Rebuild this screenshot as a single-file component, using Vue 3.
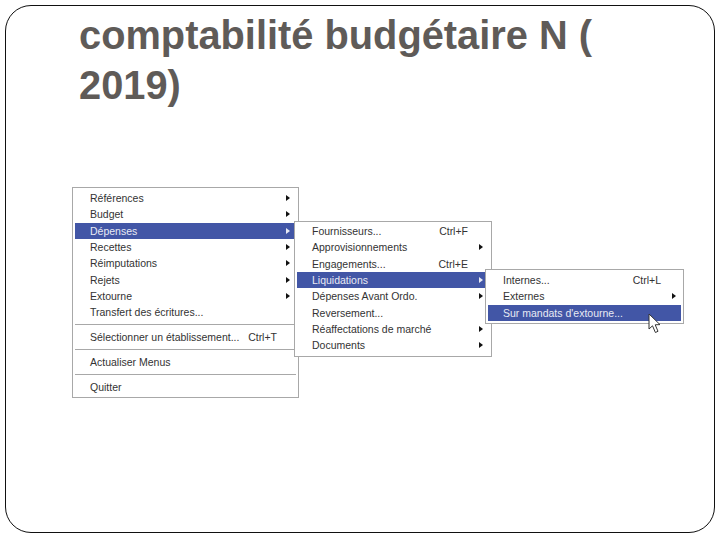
<template>
  <div class="slide">
    <h1 class="title">comptabilité budgétaire N ( 2019)</h1>
    <div class="shot">
      <ul class="menu main">
        <template v-for="(item, index) in mainMenu" :key="index">
          <li v-if="item.sep" class="sep"></li>
          <li v-else class="row" :class="{ active: item.active }">
            <span class="label">{{ item.label }}</span>
            <span v-if="item.key" class="key">{{ item.key }}</span>
            <span v-if="item.sub" class="arrow"></span>
          </li>
        </template>
      </ul>
      <ul class="menu depenses">
        <li v-for="item in depensesMenu" :key="item.label" class="row" :class="{ active: item.active }">
          <span class="label">{{ item.label }}</span>
          <span v-if="item.key" class="key">{{ item.key }}</span>
          <span v-if="item.sub" class="arrow"></span>
        </li>
      </ul>
      <ul class="menu liquidations">
        <li v-for="item in liquidationsMenu" :key="item.label" class="row" :class="{ active: item.active }">
          <span class="label">{{ item.label }}</span>
          <span v-if="item.key" class="key">{{ item.key }}</span>
          <span v-if="item.sub" class="arrow"></span>
        </li>
      </ul>
      <svg class="cursor" width="14" height="21" viewBox="0 0 14 21">
        <path d="M1 1 L1 16 L4.5 12.8 L7.4 19.5 L10 18.3 L7.2 11.8 L12 11.6 Z" fill="#fff" stroke="#333" stroke-width="1" stroke-linejoin="round" />
      </svg>
    </div>
  </div>
</template>

<script setup>
const mainMenu = [
  { label: 'Références', sub: true },
  { label: 'Budget', sub: true },
  { label: 'Dépenses', sub: true, active: true },
  { label: 'Recettes', sub: true },
  { label: 'Réimputations', sub: true },
  { label: 'Rejets', sub: true },
  { label: 'Extourne', sub: true },
  { label: 'Transfert des écritures...' },
  { sep: true },
  { label: 'Sélectionner un établissement...', key: 'Ctrl+T' },
  { sep: true },
  { label: 'Actualiser Menus' },
  { sep: true },
  { label: 'Quitter' }
]

const depensesMenu = [
  { label: 'Fournisseurs...', key: 'Ctrl+F' },
  { label: 'Approvisionnements', sub: true },
  { label: 'Engagements...', key: 'Ctrl+E' },
  { label: 'Liquidations', sub: true, active: true },
  { label: 'Dépenses Avant Ordo.', sub: true },
  { label: 'Reversement...' },
  { label: 'Réaffectations de marché', sub: true },
  { label: 'Documents', sub: true }
]

const liquidationsMenu = [
  { label: 'Internes...', key: 'Ctrl+L' },
  { label: 'Externes', sub: true },
  { label: "Sur mandats d'extourne...", active: true }
]
</script>

<style>
html,
body {
  margin: 0;
  background: #fff;
}
</style>

<style scoped>
.slide {
  box-sizing: border-box;
  width: 710px;
  height: 528px;
  margin: 5px 0 0 5px;
  padding: 4px 0 0 73px;
  border: 1.5px solid #111;
  border-radius: 26px;
  font-family: "Liberation Sans", Arial, sans-serif;
}

.title {
  width: 560px;
  margin: 0;
  font-size: 39.8px;
  line-height: 50px;
  font-weight: 700;
  color: #5f5b58;
}

.shot {
  position: relative;
  width: 227px;
  margin: 77px 0 0 -7px;
  filter: blur(0.45px);
}

.menu {
  box-sizing: border-box;
  margin: 0;
  padding: 2px;
  list-style: none;
  background: #fff;
  border: 1px solid #a8a8a8;
  font-size: 10.5px;
  color: #333;
}

.main {
  width: 227px;
  height: 211px;
}

.depenses {
  position: absolute;
  left: 222px;
  top: 34px;
  width: 198px;
  height: 136px;
  padding-top: 1px;
}

.liquidations {
  position: absolute;
  left: 413px;
  top: 82px;
  width: 199px;
  height: 55px;
}

.row {
  display: flex;
  align-items: center;
  height: 16.3px;
  padding: 0 6px 0 15px;
  white-space: nowrap;
}

.liquidations .row {
  padding-right: 5px;
}

.active {
  background: #4256a6;
  color: #e8eaf4;
}

.label {
  flex: 1;
}

.main .key {
  margin-right: 13px;
}

.depenses .key {
  margin-right: 15px;
}

.liquidations .key {
  margin-right: 15px;
}

.arrow {
  width: 0;
  height: 0;
  border-left: 4px solid #111;
  border-top: 3.5px solid transparent;
  border-bottom: 3.5px solid transparent;
}

.active .arrow {
  border-left-color: #e8eaf4;
}

.sep {
  height: 1px;
  margin: 4px 0 3.7px;
  background: #a8a8a8;
}

.cursor {
  position: absolute;
  left: 576px;
  top: 126px;
}
</style>
